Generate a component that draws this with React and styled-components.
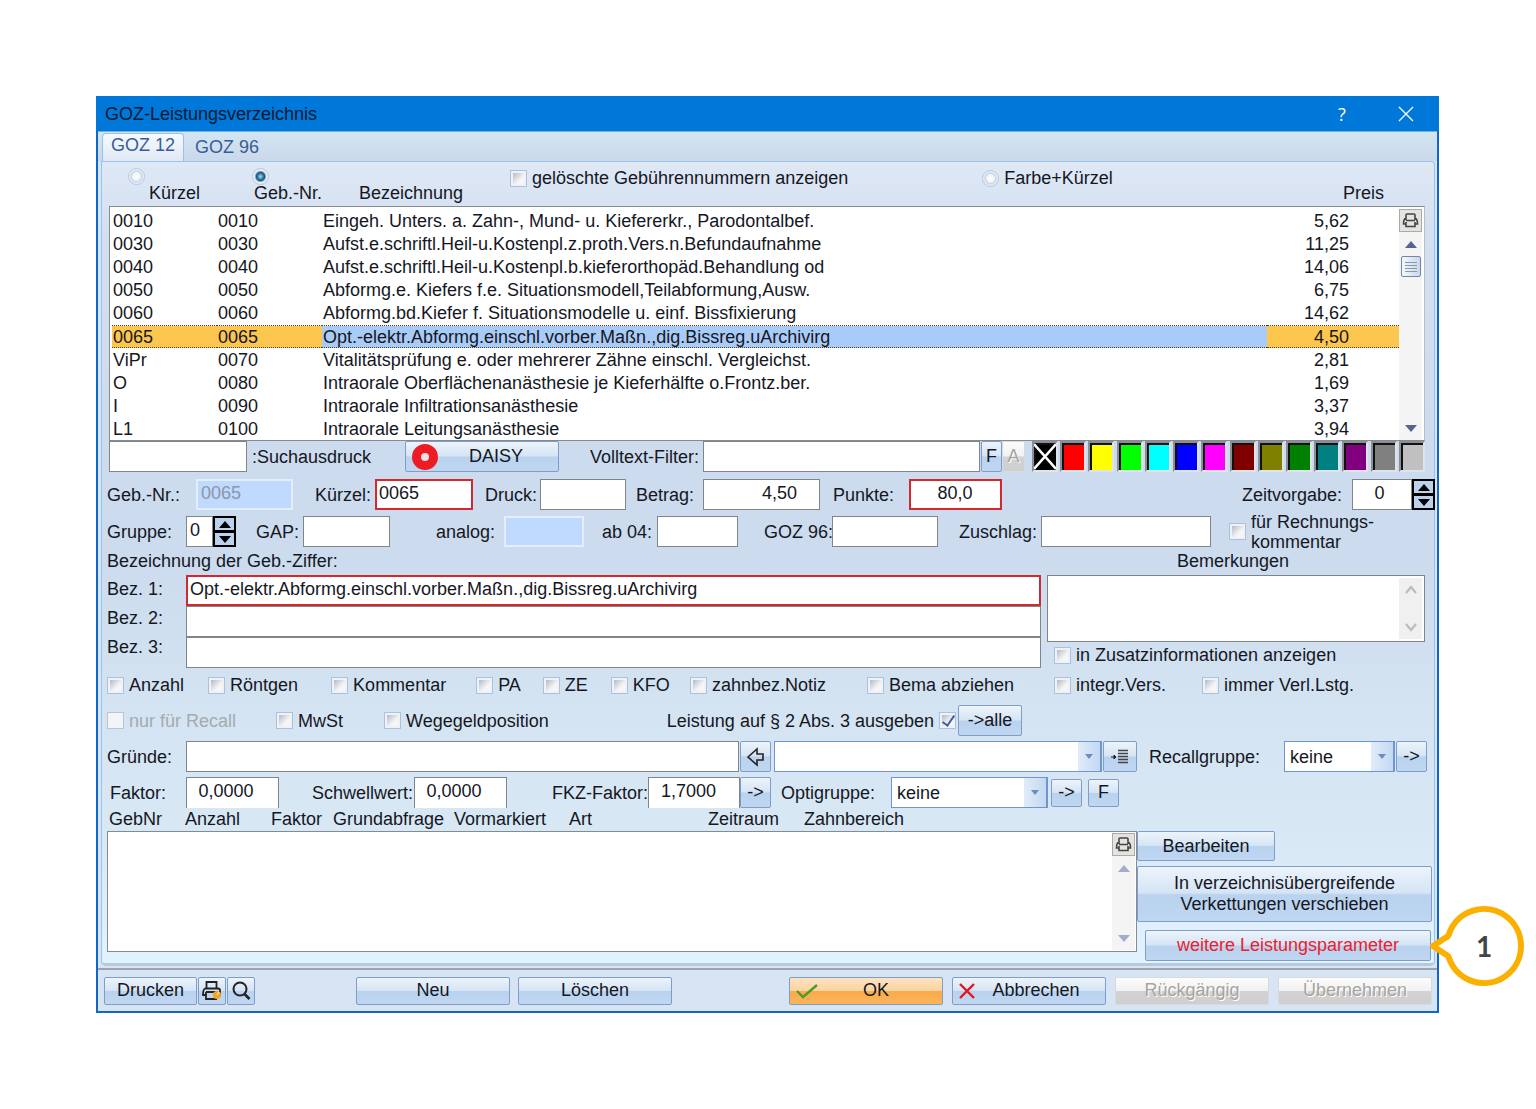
/*
 * GOZ-Leistungsverzeichnis
 *
 * Dialog with the fee list, the form of the selected fee and its links
 */
import React from 'react'
import styled, { createGlobalStyle, css } from 'styled-components'

const GlobalStyle = createGlobalStyle`
  * {
    box-sizing: border-box;
  }

  body {
    margin: 0;
    background: #fff;
    color: #15171f;
    font: 18px/22px "Liberation Sans", Arial, sans-serif;
  }

  button, input, select, textarea {
    margin: 0;
    color: inherit;
    font: inherit;
    border-radius: 0;
  }
`

const Page = styled.main`
  padding: 96px 97px 96px 96px;
`

const Window = styled.section`
  position: relative;
  min-width: 1343px;
  border: 2px solid #1266c4;
  border-top: 0;
  background: #d6e4f3;
`

const TitleBar = styled.header`
  display: flex;
  align-items: center;
  height: 35px;
  margin: 0 -2px;
  padding: 0 16px 0 9px;
  background: #0078d9;
  color: #06182f;
`

const Title = styled.h1`
  flex: 1;
  margin: 0;
  font-size: 18px;
  font-weight: normal;
`

const TitleButton = styled.button`
  display: flex;
  align-items: center;
  justify-content: center;
  width: 34px;
  height: 30px;
  margin-left: 30px;
  padding: 0;
  border: 0;
  background: none;
  color: #fff;
  font: 18px/22px "Open Sans", sans-serif;
`

const TabStrip = styled.nav`
  display: flex;
  align-items: flex-end;
  height: 30px;
  padding: 2px 4px 0;
  border-top: 1px solid #6fb1e8;
  background: linear-gradient(#d3e4f2, #c9d9eb);
`

const Tab = styled.button`
  height: 28px;
  padding: 0 11px;
  border: 0;
  background: none;
  color: #3a5c96;
  white-space: nowrap;

  ${p => p.$active && css`
    width: 82px;
    padding: 0 7px 6px;
    border: 1px solid #9fc0e4;
    border-bottom: 0;
    border-radius: 4px 4px 0 0;
    background: linear-gradient(#f6fafe, #dfe8f5);
  `}
`

const Panel = styled.div`
  margin: 0 2px 0 3px;
  padding: 0 9px 2px 5px;
  border: 1px solid #9cc3ea;
  border-bottom: 3px solid #b3cbdc;
  border-radius: 0 4px 5px 5px;
  background: linear-gradient(#dfe8f5 0, #d3e0f1 70px, #ccdbed 280px, #ccdcee 400px, #d5e4f2 560px, #d9e8f5 680px, #e1f3fe 800px);
`

const ListHead = styled.div`
  display: flex;
  align-items: flex-start;
  height: 44px;
  padding: 6px 0 0 21px;
`

const HeadChoice = styled.label`
  display: flex;
  flex-direction: column;
  width: ${p => p.$width}px;
  padding-left: ${p => p.$indent}px;
  line-height: 16px;

  input {
    margin-left: -${p => p.$indent}px;
  }
`

const HeadText = styled.span`
  flex: ${p => (p.$width ? 'none' : '1')};
  width: ${p => p.$width}px;
  padding-top: 14px;
  padding-right: ${p => (p.$width ? 0 : 41)}px;
  text-align: ${p => (p.$width ? 'left' : 'right')};
`

const Radio = styled.input.attrs({ type: 'radio' })`
  appearance: none;
  flex: none;
  width: 17px;
  height: 17px;
  border: 1px solid #b6c9e0;
  border-radius: 50%;
  background: radial-gradient(circle, #fff 0, #eef3f8 4px, #c9d6e5 5px, #e6edf6 7px);

  &:checked {
    background: radial-gradient(circle, #9fe0ee 0, #2a7da6 3px, #1c4d76 4px, #e6edf6 6px);
  }
`

const Check = styled.label`
  display: flex;
  align-items: center;
  gap: 5px;
  margin-left: ${p => p.$before || 0}px;
  line-height: 20px;
  white-space: nowrap;
  color: ${p => (p.$off ? '#a3abb0' : 'inherit')};
  flex-direction: ${p => (p.$reverse ? 'row-reverse' : 'row')};
`

const Box = styled.input.attrs({ type: 'checkbox' })`
  appearance: none;
  position: relative;
  flex: none;
  width: 17px;
  height: 17px;
  padding: 2px;
  border: 1px solid #abc2de;
  background: linear-gradient(135deg, #b4bac4, #f6f6f6 65%) content-box, #eef2f6;

  &:disabled {
    border-color: #bcc5ce;
    background: #f2f5f7;
  }

  &:checked::after {
    content: "";
    position: absolute;
    left: 5px;
    top: 0;
    width: 5px;
    height: 11px;
    border: solid #3e5f9d;
    border-width: 0 2px 2px 0;
    transform: rotate(35deg);
  }
`

const ListBox = styled.div`
  display: flex;
  height: 235px;
  margin-left: 2px;
  padding: 2px 2px 0;
  border: 1px solid #858b93;
  border-right-color: #b8bec6;
  background: #fff;
`

const FeeTable = styled.table`
  flex: 1;
  height: 232px;
  border-collapse: collapse;
  table-layout: fixed;

  td {
    padding: 0 0 0 1px;
    line-height: 20px;
    white-space: nowrap;
  }

  td:last-child {
    padding-right: 50px;
    text-align: right;
  }
`

const FeeRow = styled.tr`
  ${p => p.$selected && css`
    background: #fcc64f;

    && td {
      border-top: 1px dotted #4a3c1c;
      border-bottom: 1px dotted #4a3c1c;
      line-height: 18px;
    }

    td:nth-child(3) {
      background: #a9cbf7;
    }
  `}
`

const ScrollColumn = styled.div`
  display: flex;
  flex-direction: column;
  align-items: center;
  flex: none;
  width: 23px;
  background: #f4f4f5;
`

const PrintButton = styled.button`
  display: flex;
  align-items: center;
  justify-content: center;
  width: 23px;
  height: 23px;
  margin-bottom: 9px;
  padding: 0;
  border: 1px solid #aaa;
  background: #e5e3df;
`

const Thumb = styled.div`
  display: flex;
  justify-content: center;
  align-items: center;
  width: 20px;
  height: 21px;
  margin-top: 8px;
  border: 1px solid #6f86ae;
  border-radius: 2px;
  background: linear-gradient(90deg, #f4f8fc, #c9d8ea);
`

const Arrow = styled.i`
  flex: none;
  width: 12px;
  border: solid transparent;
  border-width: ${p => (p.$down ? '7px 6px 0' : '0 6px 7px')};
  border-top-color: ${p => (p.$down ? p.$color || '#55648f' : 'transparent')};
  border-bottom-color: ${p => (p.$down ? 'transparent' : p.$color || '#55648f')};
  margin-top: ${p => (p.$down ? 'auto' : '0')};
  margin-bottom: ${p => (p.$down ? '8px' : '0')};
`

const Row = styled.div`
  display: flex;
  align-items: center;
  height: ${p => p.$height || 31}px;
  margin-top: ${p => p.$top || 0}px;
  margin-right: -${p => p.$over || 0}px;
`

const Spring = styled.span`
  flex: 1;
`

const Label = styled.label`
  flex: none;
  width: ${p => p.$width}px;
  margin-left: ${p => p.$before || 0}px;
  white-space: nowrap;
`

const fieldLook = css`
  height: 31px;
  border: 1px solid #80858b;
  background: #fff;
  outline: none;
`

const Field = styled.input.attrs({ type: 'text' })`
  ${fieldLook}
  flex: ${p => (p.$width ? 'none' : '1')};
  width: ${p => p.$width}px;
  min-width: 0;
  margin-left: ${p => p.$before || 0}px;
  padding: 0 ${p => p.$end || 3}px 3px 3px;
  text-align: ${p => p.$text || 'left'};

  ${p => p.$red && css`
    border: 2px solid #cf2a30;
    padding-left: 2px;
  `}

  ${p => p.$open && css`
    border-bottom: 0;
  `}

  &:disabled {
    border: 2px solid #e3eefb;
    background: #bfd9ff;
    color: #8b97a8;
  }
`

const Button = styled.button`
  display: flex;
  align-items: center;
  justify-content: center;
  flex: none;
  position: relative;
  width: ${p => p.$width}px;
  height: ${p => p.$height || 31}px;
  margin-left: ${p => p.$before || 0}px;
  padding: 0;
  border: 1px solid #7f9dc7;
  border-radius: 2px;
  background: linear-gradient(#edf4fc, #d5e4f5 48%, #b9d2ee 52%, #bfd7f1);
  color: ${p => (p.$red ? '#ee1c2e' : '#15171f')};
  line-height: 21px;
  white-space: nowrap;

  ${p => p.$primary && css`
    background: linear-gradient(#fde3c2, #fcd3a0 48%, #f9ab4b 52%, #fbb45c);
  `}

  &:disabled {
    border-color: #d6dbe0;
    background: linear-gradient(#fcfcfc, #f1f1f1 48%, #d2d2d2 52%, #cfcfcf);
    color: #a5a5a0;
    text-shadow: 1px 1px 0 #fff;
  }
`

const ButtonIcon = styled.span`
  position: absolute;
  left: 6px;
  display: flex;
`

const ButtonText = styled.span`
  padding-left: ${p => p.$indent}px;
`

const Swatches = styled.div`
  display: flex;
  justify-content: space-between;
  width: 393px;
  margin-left: 7px;
`

const Swatch = styled.button`
  width: 26px;
  height: 31px;
  padding: 0;
  border: 2px solid;
  border-color: #8b8f95 #dfe4ea #dfe4ea #8b8f95;
  background: ${p => p.$color};
  box-shadow: inset 1px 1px 0 1px #111;

  svg {
    display: block;
  }
`

const Spinner = styled.div`
  display: flex;
  flex-direction: column;
  flex: none;
  width: 23px;
  height: 31px;
  background: #000;
`

const SpinButton = styled.button`
  display: flex;
  align-items: center;
  justify-content: center;
  flex: 1;
  padding: 0;
  border: 2px solid #000;
  border-top-width: ${p => (p.$last ? 1 : 2)}px;
  background: #bcd2ec;
  color: #000;
`

const ComboWrap = styled.div`
  position: relative;
  display: flex;
  flex: none;
  width: ${p => p.$width}px;
  margin-left: ${p => p.$before || 0}px;
`

const ComboSelect = styled.select`
  ${fieldLook}
  appearance: none;
  flex: 1;
  border: 1px solid #6f96cf;
  border-right-width: 2px;
  padding: 0 5px;
`

const ComboArrow = styled.span`
  position: absolute;
  right: 2px;
  top: 1px;
  bottom: 1px;
  display: flex;
  align-items: center;
  justify-content: center;
  width: 22px;
  background: linear-gradient(90deg, #e1ecf9, #c3d8f1);
  pointer-events: none;
`

const Names = styled.div`
  display: flex;
`

const NameLabels = styled.div`
  display: flex;
  flex-direction: column;
  width: 79px;
  padding-top: 3px;

  label {
    height: 29px;
    white-space: nowrap;
  }
`

const NameFields = styled.div`
  display: flex;
  flex-direction: column;
  flex: 1;

  input {
    flex: none;
  }
`

const Remarks = styled.div`
  width: 378px;
  margin-left: 6px;
`

const RemarksBox = styled.div`
  display: flex;
  height: 67px;
  padding: 2px;
  border: 1px solid #80858b;
  background: #fff;
`

const RemarksText = styled.textarea`
  flex: 1;
  min-width: 0;
  padding: 2px;
  border: 0;
  outline: none;
  resize: none;
`

const RemarksScroll = styled.div`
  display: flex;
  flex-direction: column;
  align-items: center;
  justify-content: space-between;
  width: 23px;
  padding: 7px 0;
  background: #f0f0f0;
`

const LinkHead = styled.div`
  display: flex;
  height: 23px;
  padding-left: 2px;
`

const HeadCell = styled.span`
  width: ${p => p.$width}px;
  white-space: nowrap;
`

const Links = styled.div`
  display: flex;
  margin-right: -7px;
`

const LinkBox = styled.div`
  display: flex;
  justify-content: flex-end;
  flex: 1;
  height: 121px;
  padding: 1px;
  border: 1px solid #858b93;
  background: #fff;
`

const LinkButtons = styled.div`
  display: flex;
  flex-direction: column;
  width: 295px;
`

const Footer = styled.footer`
  display: flex;
  align-items: center;
  height: 43px;
  margin-top: 2px;
  padding: 0 5px 0 6px;
  border-top: 2px solid #9da2ab;
`

const Callout = styled.div`
  position: absolute;
  right: -87px;
  bottom: 24px;
  display: flex;
  align-items: center;
  justify-content: center;
  width: 96px;
  height: 82px;
  padding-left: 16px;
  color: #444;
  font: bold 28px/30px Lato, sans-serif;

  svg {
    position: absolute;
    left: 0;
    top: 0;
  }

  span {
    position: relative;
  }
`

const fees = [
  ['0010', '0010', 'Eingeh. Unters. a. Zahn-, Mund- u. Kiefererkr., Parodontalbef.', '5,62'],
  ['0030', '0030', 'Aufst.e.schriftl.Heil-u.Kostenpl.z.proth.Vers.n.Befundaufnahme', '11,25'],
  ['0040', '0040', 'Aufst.e.schriftl.Heil-u.Kostenpl.b.kieferorthopäd.Behandlung od', '14,06'],
  ['0050', '0050', 'Abformg.e. Kiefers  f.e. Situationsmodell,Teilabformung,Ausw.', '6,75'],
  ['0060', '0060', 'Abformg.bd.Kiefer f. Situationsmodelle u. einf. Bissfixierung', '14,62'],
  ['0065', '0065', 'Opt.-elektr.Abformg.einschl.vorber.Maßn.,dig.Bissreg.uArchivirg', '4,50'],
  ['ViPr', '0070', 'Vitalitätsprüfung e. oder mehrerer Zähne einschl. Vergleichst.', '2,81'],
  ['O', '0080', 'Intraorale Oberflächenanästhesie je Kieferhälfte o.Frontz.ber.', '1,69'],
  ['I', '0090', 'Intraorale Infiltrationsanästhesie', '3,37'],
  ['L1', '0100', 'Intraorale Leitungsanästhesie', '3,94'],
]

const colors = [
  '#000', '#f00', '#ff0', '#0f0', '#0ff', '#00f', '#f0f',
  '#800000', '#808000', '#008000', '#008080', '#800080', '#808080', '#c0c0c0',
]

const linkColumns = [
  ['GebNr', 76], ['Anzahl', 86], ['Faktor', 62], ['Grundabfrage', 121],
  ['Vormarkiert', 115], ['Art', 139], ['Zeitraum', 96], ['Zahnbereich', 120],
]

const PrinterIcon = () => (
  <svg width="17" height="17" viewBox="0 0 17 17" fill="none" stroke="#444" strokeWidth="1.6">
    <path d="M4 8V3q0-1 1-1h7q1 0 1 1v5M4 6q-2.500 1-2.500 6H4M13 6q2.500 1 2.500 6H13M4 8.500h9M4 10v4.500h9V10" />
  </svg>
)

const PrinterSetupIcon = () => (
  <svg width="22" height="22" viewBox="0 0 22 22" fill="none" stroke="#222" strokeWidth="1.8">
    <path d="M5.500 8V2h10v6M4 8.500h13q2 0 2 2V15h-3M4 8.500q-2 1-2 6.500h3M5 12h11M5 12v7h11" />
    <circle cx="16" cy="15" r="4" fill="#f5a51c" stroke="none" />
    <path d="M16 15l2-3" stroke="#fff3d0" strokeWidth="1.2" />
  </svg>
)

const SearchIcon = () => (
  <svg width="22" height="22" viewBox="0 0 22 22" fill="none" stroke="#222" strokeWidth="2">
    <circle cx="10" cy="9" r="6.5" />
    <path d="M14.500 14l5 5" strokeWidth="2.6" />
  </svg>
)

const Chevron = ({ d }) => (
  <svg width="12" height="9" viewBox="0 0 12 9" fill="none" stroke="#bcbcbc" strokeWidth="2.2">
    <path d={d} />
  </svg>
)

const Combo = ({ id, label, value, width, before }) => (
  <ComboWrap $width={width} $before={before}>
    <ComboSelect id={id} aria-label={label} defaultValue={value}>
      <option value={value}>{value}</option>
    </ComboSelect>
    <ComboArrow>
      <svg width="8" height="5"><path d="M0 0h8l-4 5z" fill="#6c8cc4" /></svg>
    </ComboArrow>
  </ComboWrap>
)

const Spin = ({ label }) => (
  <Spinner>
    <SpinButton aria-label={`${label} +`}>
      <svg width="12" height="7"><path d="M6 0l6 7H0z" /></svg>
    </SpinButton>
    <SpinButton $last aria-label={`${label} -`}>
      <svg width="12" height="7"><path d="M0 0h12L6 7z" /></svg>
    </SpinButton>
  </Spinner>
)

const Option = ({ text, before, ...rest }) => (
  <Check $before={before} $off={rest.disabled}>
    <Box {...rest} />
    {text}
  </Check>
)

const FeeList = () => (
  <>
    <ListHead>
      <HeadChoice $width={124} $indent={21}>
        <Radio name="sort" />
        Kürzel
      </HeadChoice>
      <HeadChoice $width={107} $indent={2}>
        <Radio name="sort" defaultChecked />
        Geb.-Nr.
      </HeadChoice>
      <HeadText $width={151}>Bezeichnung</HeadText>
      <Option text="gelöschte Gebührennummern anzeigen" />
      <Check $before={134}>
        <Radio name="sort" />
        Farbe+Kürzel
      </Check>
      <HeadText>Preis</HeadText>
    </ListHead>
    <ListBox>
      <FeeTable aria-label="Leistungen">
        <colgroup>
          <col width="105" />
          <col width="105" />
          <col />
          <col width="132" />
        </colgroup>
        <tbody>
          {fees.map((fee) => (
            <FeeRow key={fee[1]} $selected={fee[1] === '0065'}>
              {fee.map((value, i) => <td key={i}>{value}</td>)}
            </FeeRow>
          ))}
        </tbody>
      </FeeTable>
      <ScrollColumn>
        <PrintButton aria-label="Liste drucken"><PrinterIcon /></PrintButton>
        <Arrow />
        <Thumb>
          <svg width="12" height="12" stroke="#8a98a8"><path d="M0 1.500h12M0 4.500h12M0 7.500h12M0 10.500h12" /></svg>
        </Thumb>
        <Arrow $down />
      </ScrollColumn>
    </ListBox>
  </>
)

const SearchRow = () => (
  <Row>
    <Field id="search" $width={138} $before={2} />
    <Label htmlFor="search" $width={153} $before={5}>:Suchausdruck</Label>
    <Button $width={154}>
      <ButtonIcon>
        <svg width="26" height="26">
          <circle cx="13" cy="13" r="8.5" fill="#f6dfe2" stroke="#ed1c24" strokeWidth="9" />
        </svg>
      </ButtonIcon>
      <ButtonText $indent={28}>DAISY</ButtonText>
    </Button>
    <Label htmlFor="filter" $width={113} $before={31}>Volltext-Filter:</Label>
    <Field id="filter" />
    <Button $width={21} $before={1}>F</Button>
    <Button $width={23} disabled>A</Button>
    <Swatches>
      {colors.map((color) => (
        <Swatch key={color} $color={color} aria-label={color}>
          {color === '#000' && (
            <svg width="22" height="27" stroke="#fff" strokeWidth="2.5"><path d="M0 1l22 25M22 1L0 26" /></svg>
          )}
        </Swatch>
      ))}
    </Swatches>
  </Row>
)

const FeeForm = () => (
  <>
    <Row $top={7} $over={10}>
      <Label htmlFor="nr" $width={89}>Geb.-Nr.:</Label>
      <Field id="nr" $width={97} defaultValue="0065" disabled />
      <Label htmlFor="short" $width={60} $before={22}>Kürzel:</Label>
      <Field id="short" $width={98} defaultValue="0065" $red />
      <Label htmlFor="print" $width={55} $before={12}>Druck:</Label>
      <Field id="print" $width={86} />
      <Label htmlFor="amount" $width={67} $before={10}>Betrag:</Label>
      <Field id="amount" $width={117} defaultValue="4,50" $text="right" $end={22} />
      <Label htmlFor="points" $width={76} $before={13}>Punkte:</Label>
      <Field id="points" $width={93} defaultValue="80,0" $text="center" $red />
      <Spring />
      <Label htmlFor="time" $width={110}>Zeitvorgabe:</Label>
      <Field id="time" $width={60} defaultValue="0" $text="center" $end={8} />
      <Spin label="Zeitvorgabe" />
    </Row>
    <Row $top={6}>
      <Label htmlFor="group" $width={79}>Gruppe:</Label>
      <Field id="group" $width={27} defaultValue="0" />
      <Spin label="Gruppe" />
      <Label htmlFor="gap" $width={47} $before={20}>GAP:</Label>
      <Field id="gap" $width={87} />
      <Label htmlFor="analog" $width={68} $before={46}>analog:</Label>
      <Field id="analog" $width={80} disabled />
      <Label htmlFor="from04" $width={55} $before={18}>ab 04:</Label>
      <Field id="from04" $width={81} />
      <Label htmlFor="goz96" $width={68} $before={26}>GOZ 96:</Label>
      <Field id="goz96" $width={106} />
      <Label htmlFor="extra" $width={82} $before={21}>Zuschlag:</Label>
      <Field id="extra" />
      <Check $before={18}>
        <Box />
        <span>für Rechnungs-<br />kommentar</span>
      </Check>
      <Label as="span" $width={51} />
    </Row>
    <Row $height={28}>
      <Label as="span" $width={240}>Bezeichnung der Geb.-Ziffer:</Label>
      <Spring />
      <Label htmlFor="remarks" $width={248}>Bemerkungen</Label>
    </Row>
    <Names>
      <NameLabels>
        <label htmlFor="name1">Bez. 1:</label>
        <label htmlFor="name2">Bez. 2:</label>
        <label htmlFor="name3">Bez. 3:</label>
      </NameLabels>
      <NameFields>
        <Field id="name1" $red defaultValue="Opt.-elektr.Abformg.einschl.vorber.Maßn.,dig.Bissreg.uArchivirg" />
        <Field id="name2" />
        <Field id="name3" />
      </NameFields>
      <Remarks>
        <RemarksBox>
          <RemarksText id="remarks" />
          <RemarksScroll>
            <Chevron d="M1 8l5-6 5 6" />
            <Chevron d="M1 1l5 6 5-6" />
          </RemarksScroll>
        </RemarksBox>
        <Row $height={26}>
          <Option text="in Zusatzinformationen anzeigen" before={7} />
        </Row>
      </Remarks>
    </Names>
    <Row $height={34}>
      <Option text="Anzahl" />
      <Option text="Röntgen" before={24} />
      <Option text="Kommentar" before={33} />
      <Option text="PA" before={30} />
      <Option text="ZE" before={22} />
      <Option text="KFO" before={23} />
      <Option text="zahnbez.Notiz" before={20} />
      <Option text="Bema abziehen" before={41} />
      <Spring />
      <Option text="integr.Vers." />
      <Option text="immer Verl.Lstg." before={36} />
      <Label as="span" $width={71} />
    </Row>
    <Row $top={3}>
      <Option text="nur für Recall" disabled />
      <Option text="MwSt" before={40} />
      <Option text="Wegegeldposition" before={41} />
      <Check $before={118} $reverse>
        <Box defaultChecked />
        Leistung auf § 2 Abs. 3 ausgeben
      </Check>
      <Button $width={64} $before={2}>-&gt;alle</Button>
    </Row>
    <Row $top={5} $over={2}>
      <Label htmlFor="reason" $width={79}>Gründe:</Label>
      <Field id="reason" />
      <Button $width={31} $before={1} aria-label="Grund übernehmen">
        <svg width="18" height="20" fill="none" stroke="#222" strokeWidth="1.6">
          <path d="M1 10l9-8v5h6v6h-6v5z" />
        </svg>
      </Button>
      <Combo label="Gründe Auswahl" value="" width={328} before={3} />
      <Button $width={34} $before={1} aria-label="Gründe Liste">
        <svg width="18" height="18" stroke="#444">
          <path d="M7 2.500h10M7 5.500h10M7 8.500h10M7 11.500h10M7 14.500h10" strokeWidth="1.3" />
          <path d="M0 9h5M3 7l2 2-2 2z" fill="#222" stroke="#222" />
        </svg>
      </Button>
      <Label htmlFor="recall" $width={135} $before={12}>Recallgruppe:</Label>
      <Combo id="recall" value="keine" width={111} />
      <Button $width={31} $before={1}>-&gt;</Button>
    </Row>
    <Row $top={5}>
      <Label htmlFor="factor" $width={76} $before={3}>Faktor:</Label>
      <Field id="factor" $width={93} defaultValue="0,0000" $text="center" $end={16} $open />
      <Label htmlFor="limit" $width={102} $before={33}>Schwellwert:</Label>
      <Field id="limit" $width={93} defaultValue="0,0000" $text="center" $end={16} $open />
      <Label htmlFor="fkz" $width={96} $before={45}>FKZ-Faktor:</Label>
      <Field id="fkz" $width={92} defaultValue="1,7000" $text="center" $end={14} $open />
      <Button $width={31}>-&gt;</Button>
      <Label htmlFor="opti" $width={110} $before={10}>Optigruppe:</Label>
      <Combo id="opti" value="keine" width={157} />
      <Button $width={31} $height={28} $before={3}>-&gt;</Button>
      <Button $width={31} $height={28} $before={6}>F</Button>
    </Row>
  </>
)

const LinkList = () => (
  <>
    <LinkHead>
      {linkColumns.map(([name, width]) => <HeadCell key={name} $width={width}>{name}</HeadCell>)}
    </LinkHead>
    <Links>
      <LinkBox>
        <ScrollColumn>
          <PrintButton aria-label="Verkettungen drucken"><PrinterIcon /></PrintButton>
          <Arrow $color="#a3acca" />
          <Arrow $down $color="#a3acca" />
        </ScrollColumn>
      </LinkBox>
      <LinkButtons>
        <Row $height={30}><Button $width={138} $height={30}>Bearbeiten</Button></Row>
        <Row $height={56} $top={5}>
          <Button $width={295} $height={56}>In verzeichnisübergreifende<br />Verkettungen verschieben</Button>
        </Row>
        <Row $top={8}><Button $width={286} $before={8} $red>weitere Leistungsparameter</Button></Row>
      </LinkButtons>
    </Links>
  </>
)

const Actions = () => (
  <Footer>
    <Button $width={93} $height={28}>Drucken</Button>
    <Button $width={28} $height={28} $before={1} aria-label="Druckeinstellungen"><PrinterSetupIcon /></Button>
    <Button $width={28} $height={28} $before={1} aria-label="Suchen"><SearchIcon /></Button>
    <Button $width={154} $height={28} $before={101}>Neu</Button>
    <Button $width={154} $height={28} $before={8}>Löschen</Button>
    <Spring />
    <Button $width={154} $height={28} $primary>
      <ButtonIcon>
        <svg width="22" height="16" fill="none" stroke="#4f9a2c" strokeWidth="2.4"><path d="M1 8l6 6L21 2" /></svg>
      </ButtonIcon>
      <ButtonText $indent={20}>OK</ButtonText>
    </Button>
    <Button $width={154} $height={28} $before={9}>
      <ButtonIcon>
        <svg width="16" height="16" fill="none" stroke="#e8141c" strokeWidth="2.4"><path d="M1 1l14 14M15 1L1 15" /></svg>
      </ButtonIcon>
      <ButtonText $indent={14}>Abbrechen</ButtonText>
    </Button>
    <Button $width={154} $height={28} $before={9} disabled>Rückgängig</Button>
    <Button $width={154} $height={28} $before={9} disabled>Übernehmen</Button>
  </Footer>
)

const App = () => (
  <Page>
    <GlobalStyle />
    <Window>
      <TitleBar>
        <Title>GOZ-Leistungsverzeichnis</Title>
        <TitleButton>?</TitleButton>
        <TitleButton aria-label="Schließen">
          <svg width="16" height="16" stroke="#fff" strokeWidth="1.3"><path d="M1 1l14 14M15 1L1 15" /></svg>
        </TitleButton>
      </TitleBar>
      <TabStrip>
        <Tab $active>GOZ 12</Tab>
        <Tab>GOZ 96</Tab>
      </TabStrip>
      <Panel>
        <FeeList />
        <SearchRow />
        <FeeForm />
        <LinkList />
      </Panel>
      <Actions />
      <Callout>
        <svg width="96" height="82" fill="#fff" stroke="#fbb000" strokeWidth="6">
          <path d="M21 29A37 37 0 1 1 21 53Q20 50 17 49L5 41L17 33Q20 32 21 29z" strokeLinejoin="round" />
        </svg>
        <span>1</span>
      </Callout>
    </Window>
  </Page>
)

export default App
